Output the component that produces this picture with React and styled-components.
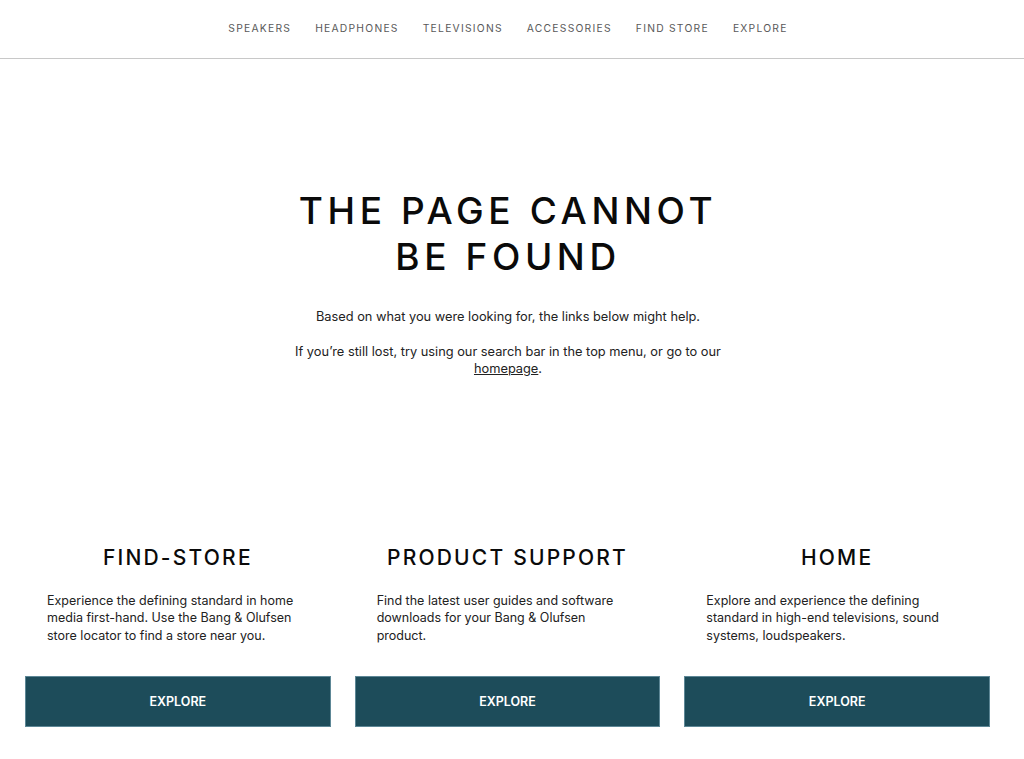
import styled, { createGlobalStyle } from "styled-components"

const GlobalStyle = createGlobalStyle`
  * {
    box-sizing: border-box;
  }

  body {
    margin: 0;
    background: #fff;
    color: #111;
    font-family: Inter, "Liberation Sans", sans-serif;
    -webkit-font-smoothing: antialiased;
  }

  a {
    color: inherit;
  }
`

const navItems = ["Speakers", "Headphones", "Televisions", "Accessories", "Find store", "Explore"]

const cards = [
  {
    title: "Find-store",
    text: "Experience the defining standard in home media first-hand. Use the Bang & Olufsen store locator to find a store near you.",
  },
  {
    title: "Product support",
    text: "Find the latest user guides and software downloads for your Bang & Olufsen product.",
  },
  {
    title: "Home",
    text: "Explore and experience the defining standard in high-end televisions, sound systems, loudspeakers.",
  },
]

const App = () => {
  return (
    <>
      <GlobalStyle />
      <Header>
        <Navigation>
          {navItems.map((item) => (
            <NavLink key={item} href="#">{item}</NavLink>
          ))}
        </Navigation>
      </Header>
      <Main>
        <Hero>
          <Title>
            The page cannot
            <br />
            be found
          </Title>
          <Lead>Based on what you were looking for, the links below might help.</Lead>
          <Lead>
            If you&rsquo;re still lost, try using our search bar in the top menu, or go to our{' '}
            <a href="#">homepage</a>.
          </Lead>
        </Hero>
        <Cards>
          {cards.map((card) => (
            <Card key={card.title}>
              <CardTitle>{card.title}</CardTitle>
              <CardText>{card.text}</CardText>
              <ExploreButton href="#">Explore</ExploreButton>
            </Card>
          ))}
        </Cards>
      </Main>
    </>
  )
}

export default App

const Header = styled.header`
  height: 59px;
  border-bottom: 1px solid #c8c8c8;
  display: flex;
  justify-content: center;
  padding: 21px 8px 0 0;
`

const Navigation = styled.nav`
  display: flex;
  gap: 24px;
  height: 14px;
`

const NavLink = styled.a`
  font-size: 10.3px;
  line-height: 14px;
  letter-spacing: 1.25px;
  text-transform: uppercase;
  text-decoration: none;
  color: #595959;
`

const Main = styled.main`
  display: flex;
  flex-direction: column;
  width: 1016px;
`

const Hero = styled.section`
  display: flex;
  flex-direction: column;
  align-items: center;
  padding-top: 129px;
  text-align: center;
`

const Title = styled.h1`
  margin: 0 0 28px;
  font-size: 37px;
  line-height: 46px;
  font-weight: 500;
  letter-spacing: 4.6px;
  text-transform: uppercase;
  color: #0a0a0a;
`

const Lead = styled.p`
  margin: 0 0 17px;
  max-width: 440px;
  font-size: 12.8px;
  line-height: 17.5px;
  color: #222;

  a {
    text-decoration: underline;
  }
`

const Cards = styled.section`
  display: grid;
  grid-template-columns: repeat(3, 1fr);
  gap: 24px;
  padding: 149px 26px 0 25px;
`

const Card = styled.div`
  display: flex;
  flex-direction: column;
`

const CardTitle = styled.h2`
  margin: 0 0 20px;
  text-align: center;
  font-size: 21px;
  line-height: 28px;
  font-weight: 500;
  letter-spacing: 2.2px;
  text-transform: uppercase;
  color: #0a0a0a;
`

const CardText = styled.p`
  margin: 0 0 32px;
  padding: 0 24px 0 22px;
  min-height: 52px;
  font-size: 12.5px;
  line-height: 17.5px;
  color: #222;
`

const ExploreButton = styled.a`
  display: flex;
  align-items: center;
  justify-content: center;
  height: 51px;
  background: #1d4c5a;
  border: 1px solid #5d8796;
  color: #fff;
  font-size: 12.5px;
  font-weight: 600;
  text-transform: uppercase;
  text-decoration: none;
`
